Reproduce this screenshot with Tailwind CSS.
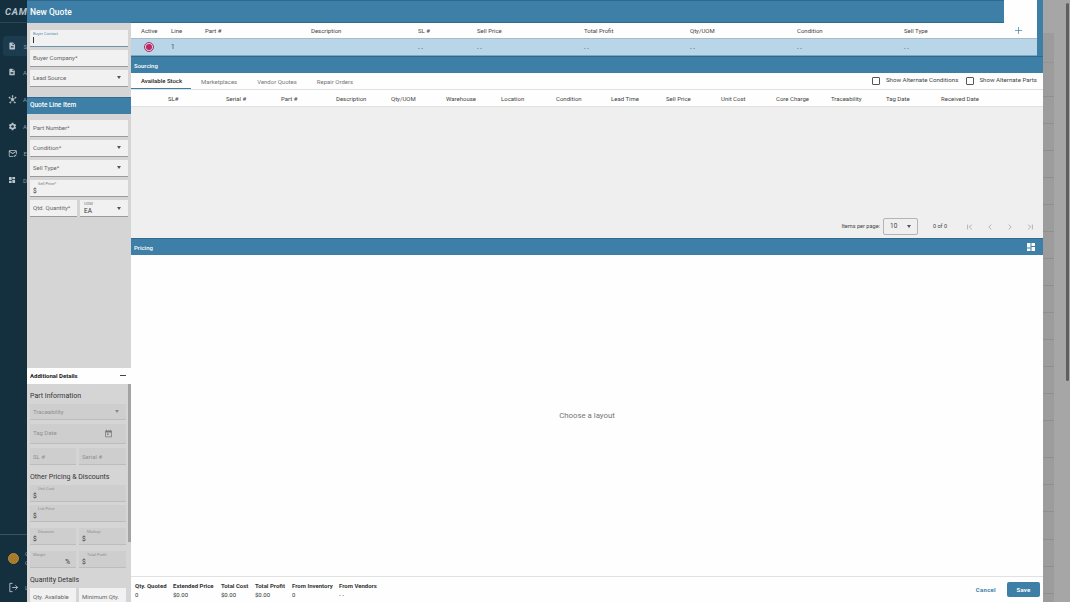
<!DOCTYPE html>
<html lang="en">
<head>
    <meta charset="UTF-8">
    <meta name="viewport" content="width=device-width, initial-scale=1.0">
    <title>New Quote</title>
    <script src="https://cdn.jsdelivr.net/npm/@tailwindcss/browser@4"></script>
</head>
<body class="relative w-[1070px] h-[602px] overflow-hidden bg-[#a6a6a6] font-['Roboto',sans-serif] text-[6px] text-[#3a3a3a]">

    <!-- page behind the dialog -->
    <div class="flex h-full">
        <aside class="w-[27px] shrink-0 h-full bg-[#14303f] flex flex-col">
            <div class="h-[23px] border-b border-[#2b4656] pl-[5px] pt-[6px] text-[9.5px] leading-[11px] font-bold italic text-[#b9c4ca] tracking-[0.8px] whitespace-nowrap">CAM.</div>
            <div class="mt-[13px] ml-[3px] w-[24px] h-[20px] rounded-l-[3px] bg-[#1b3c4e] pl-[5px] flex items-center gap-[7px] text-[#8b9aa3]">
                <svg class="w-[10px] h-[10px] fill-[#b9c3c9]" viewBox="0 0 24 24"><path d="M14 2H6c-1.1 0-1.99.9-1.99 2L4 20c0 1.1.89 2 1.99 2H18c1.1 0 2-.9 2-2V8l-6-6zm2 16H8v-2h8v2zm0-4H8v-2h8v2zm-3-5V3.5L18.5 9H13z"/></svg>
                <span>S</span>
            </div>
            <div class="mt-[6px] h-[20px] pl-[8px] flex items-center gap-[7px] text-[#8b9aa3]">
                <svg class="w-[10px] h-[10px] fill-[#b9c3c9]" viewBox="0 0 24 24"><path d="M14 2H6c-1.1 0-1.99.9-1.99 2L4 20c0 1.1.89 2 1.99 2H18c1.1 0 2-.9 2-2V8l-6-6zm2 16H8v-2h8v2zm0-4H8v-2h8v2zm-3-5V3.5L18.5 9H13z"/></svg>
                <span>A</span>
            </div>
            <div class="mt-[7px] h-[20px] pl-[8px] flex items-center gap-[6px] text-[#8b9aa3]">
                <svg class="w-[11px] h-[11px] fill-[#b9c3c9] stroke-[#b9c3c9]" viewBox="0 0 24 24" stroke-width="1.6"><circle cx="12" cy="12" r="3.5"/><path d="M12 12V3M12 12l8 -5M12 12l6 8M12 12l-6 8M12 12L4 7"/><circle cx="12" cy="3" r="1.6"/><circle cx="20" cy="7" r="1.6"/><circle cx="18" cy="20" r="1.6"/><circle cx="6" cy="20" r="1.6"/><circle cx="4" cy="7" r="1.6"/></svg>
                <span>A</span>
            </div>
            <div class="mt-[7px] h-[20px] pl-[8px] flex items-center gap-[6px] text-[#8b9aa3]">
                <svg class="w-[11px] h-[11px] fill-[#b9c3c9]" viewBox="0 0 24 24"><path d="M19.14 12.94c.04-.3.06-.61.06-.94 0-.32-.02-.64-.07-.94l2.03-1.58c.18-.14.23-.41.12-.61l-1.92-3.32c-.12-.22-.37-.29-.59-.22l-2.39.96c-.5-.38-1.03-.7-1.62-.94l-.36-2.54c-.04-.24-.24-.41-.48-.41h-3.84c-.24 0-.43.17-.47.41l-.36 2.54c-.59.24-1.13.57-1.62.94l-2.39-.96c-.22-.08-.47 0-.59.22L2.74 8.87c-.12.21-.08.47.12.61l2.03 1.58c-.05.3-.09.63-.09.94s.02.64.07.94l-2.03 1.58c-.18.14-.23.41-.12.61l1.92 3.32c.12.22.37.29.59.22l2.39-.96c.5.38 1.03.7 1.62.94l.36 2.54c.05.24.24.41.48.41h3.84c.24 0 .44-.17.47-.41l.36-2.54c.59-.24 1.13-.56 1.62-.94l2.39.96c.22.08.47 0 .59-.22l1.92-3.32c.12-.22.07-.47-.12-.61l-2.01-1.58zM12 15.6c-1.98 0-3.6-1.62-3.6-3.6s1.62-3.6 3.6-3.6 3.6 1.62 3.6 3.6-1.62 3.6-3.6 3.6z"/></svg>
                <span>A</span>
            </div>
            <div class="mt-[7px] h-[20px] pl-[8px] flex items-center gap-[6px] text-[#8b9aa3]">
                <svg class="w-[11px] h-[11px] fill-[#b9c3c9]" viewBox="0 0 24 24"><path d="M20 4H4c-1.1 0-2 .9-2 2v12c0 1.1.9 2 2 2h9v-2H4V8l8 5 8-5v5h2V6c0-1.1-.9-2-2-2zm-8 7L4 6h16l-8 5zm4.5 9.5l-2.5-2.5 1.4-1.4 1.1 1.1 3.6-3.6 1.4 1.4-5 5z"/></svg>
                <span>E</span>
            </div>
            <div class="mt-[7px] h-[20px] pl-[8px] flex items-center gap-[7px] text-[#8b9aa3]">
                <svg class="w-[10px] h-[10px] fill-[#b9c3c9]" viewBox="0 0 24 24"><path d="M3 13h8V3H3v10zm0 8h8v-6H3v6zm10 0h8V11h-8v10zm0-18v6h8V3h-8z"/></svg>
                <span>D</span>
            </div>
            <div class="mt-auto border-t border-[#3a5362] h-[68px] pl-[8px] flex flex-col">
                <div class="mt-[14px] flex items-center gap-[6px] text-[#8b9aa3]">
                    <div class="w-[11px] h-[11px] shrink-0 rounded-full bg-[#a97a2c] border border-[#b98a3a]"></div>
                    <div class="leading-[9px]"><div>G</div><div>C</div></div>
                </div>
                <div class="mt-[15px] flex items-center gap-[6px] text-[#8b9aa3]">
                    <svg class="w-[11px] h-[11px] shrink-0 fill-none stroke-[#b9c3c9]" viewBox="0 0 24 24" stroke-width="2"><path d="M10 3H4v18h6M9 12h12M16 7l5 5-5 5"/></svg>
                    <span>L</span>
                </div>
            </div>
        </aside>
        <main class="flex-1 h-full flex">
            <div class="ml-[1016px] w-[11px] h-full shrink-0 flex flex-col">
                <div class="h-[33px]"></div>
                <div class="h-[30px] bg-[#9c9c9c] border-b border-[#949494]"></div>
                <div class="h-[34px] bg-[#9c9c9c] border-b border-[#8f8f8f]"></div>
                <div class="h-[27px] bg-[#9c9c9c] border-b border-[#8f8f8f]"></div>
                <div class="h-[27px] bg-[#9c9c9c] border-b border-[#8f8f8f]"></div>
                <div class="h-[27px] bg-[#9c9c9c] border-b border-[#8f8f8f]"></div>
                <div class="h-[27px] bg-[#9c9c9c] border-b border-[#8f8f8f]"></div>
                <div class="h-[27px] bg-[#9c9c9c] border-b border-[#8f8f8f]"></div>
                <div class="h-[27px] bg-[#9c9c9c] border-b border-[#8f8f8f]"></div>
                <div class="h-[27px] bg-[#9c9c9c] border-b border-[#8f8f8f]"></div>
                <div class="h-[27px] bg-[#9c9c9c] border-b border-[#8f8f8f]"></div>
                <div class="h-[27px] bg-[#9c9c9c] border-b border-[#8f8f8f]"></div>
                <div class="h-[27px] bg-[#9c9c9c] border-b border-[#8f8f8f]"></div>
                <div class="h-[27px] bg-[#9c9c9c] border-b border-[#8f8f8f]"></div>
                <div class="h-[27px] bg-[#9c9c9c] border-b border-[#8f8f8f]"></div>
                <div class="h-[37px] bg-[#9c9c9c] border-b border-[#8f8f8f]"></div>
                <div class="h-[27px] bg-[#9c9c9c] border-b border-[#8f8f8f]"></div>
                <div class="h-[27px] bg-[#9c9c9c] border-b border-[#8f8f8f]"></div>
                <div class="h-[28px] bg-[#9c9c9c] border-b border-[#8f8f8f]"></div>
                <div class="h-[27px] bg-[#9c9c9c] border-b border-[#8f8f8f]"></div>
                <div class="h-[27px] bg-[#9c9c9c] border-b border-[#8f8f8f]"></div>
                <div class="flex-1 bg-[#9c9c9c]"></div>
            </div>
        </main>
    </div>
    <div class="absolute left-[1066px] top-[3px] w-[2.5px] h-[378px] rounded-full bg-[#5f5f5f]"></div>

    <!-- dialog -->
    <div class="absolute left-[27px] top-0 w-[1016px] h-[602px] flex bg-white opacity-[.995]">

        <!-- left form -->
        <div class="w-[104px] shrink-0 h-full flex flex-col bg-[#d6d6d6]">
            <div class="h-[23px] shrink-0 bg-[#3d7fa6] border-t border-[#2f6a8e] pl-[3px] flex items-center text-[8.5px] font-medium text-white">New Quote</div>
            <div class="h-[345px] shrink-0 flex flex-col px-[3px]">
                <div class="mt-[7px] h-[17px] bg-[#f2f2f2] border-b border-[#6d93ab] rounded-t-[1px] pl-[3px] pt-[1px]">
                    <div class="text-[4px] leading-[5px] text-[#5a8fb0]">Buyer Contact</div>
                    <div class="mt-[1px] w-px h-[6px] bg-[#333]"></div>
                </div>
                <div class="mt-[3px] h-[17px] bg-[#f2f2f2] border-b border-[#9a9a9a] pl-[3px] pb-[1px] flex items-center text-[#666]">Buyer Company*</div>
                <div class="mt-[3px] h-[17px] bg-[#f2f2f2] border-b border-[#9a9a9a] pl-[3px] pr-[7px] pb-[1px] flex items-center justify-between text-[#666]">Lead Source<span class="w-0 h-0 border-x-[2.5px] border-x-transparent border-t-[3px] border-t-[#555]"></span></div>
                <div class="mt-[10px] -mx-[3px] h-[17px] bg-[#3d7fa6] border-t border-[#2f6a8e] pl-[3px] flex items-center text-[6.5px] font-medium text-white">Quote Line Item</div>
                <div class="mt-[6px] h-[17px] bg-[#f2f2f2] border-b border-[#9a9a9a] pl-[3px] pb-[1px] flex items-center text-[#666]">Part Number*</div>
                <div class="mt-[3px] h-[17px] bg-[#f2f2f2] border-b border-[#9a9a9a] pl-[3px] pr-[7px] pb-[1px] flex items-center justify-between text-[#666]">Condition*<span class="w-0 h-0 border-x-[2.5px] border-x-transparent border-t-[3px] border-t-[#555]"></span></div>
                <div class="mt-[3px] h-[17px] bg-[#f2f2f2] border-b border-[#9a9a9a] pl-[3px] pr-[7px] pb-[1px] flex items-center justify-between text-[#666]">Sell Type*<span class="w-0 h-0 border-x-[2.5px] border-x-transparent border-t-[3px] border-t-[#555]"></span></div>
                <div class="mt-[3px] h-[17px] bg-[#f2f2f2] border-b border-[#9a9a9a] pl-[3px] pt-[1px]">
                    <div class="pl-[5px] text-[4px] leading-[5px] text-[#777]">Sell Price*</div>
                    <div class="mt-[1px] text-[6.5px] leading-[8px] text-[#333]">$</div>
                </div>
                <div class="mt-[3px] flex gap-[3px]">
                    <div class="w-[47px] h-[17px] bg-[#f2f2f2] border-b border-[#9a9a9a] pl-[3px] pb-[1px] flex items-center text-[#666]">Qtd. Quantity*</div>
                    <div class="w-[48px] h-[17px] bg-[#f2f2f2] border-b border-[#9a9a9a] pl-[4px] pr-[7px] flex items-center justify-between">
                        <div><div class="text-[4px] leading-[5px] text-[#777]">UOM</div><div class="mt-[1px] text-[6.5px] leading-[8px] text-[#333]">EA</div></div>
                        <span class="w-0 h-0 border-x-[2.5px] border-x-transparent border-t-[3px] border-t-[#555]"></span>
                    </div>
                </div>
            </div>
            <div class="h-[16px] shrink-0 bg-white pl-[3px] pr-[5px] pb-[2px] flex items-center justify-between font-bold text-[#222]">Additional Details<span class="w-[6px] h-[1px] bg-[#444]"></span></div>
            <div class="flex-1 flex min-h-0 overflow-hidden">
                <div class="w-[101px] pl-[3px] pr-[2px] flex flex-col shrink-0 self-start">
                    <div class="mt-[8px] text-[7px] leading-[9px] text-[#333]">Part Information</div>
                    <div class="mt-[3px] h-[16px] bg-[#cfcfcf] border-b border-[#bdbdbd] pl-[3px] pr-[7px] flex items-center justify-between text-[#929292]">Traceability<span class="w-0 h-0 border-x-[2.5px] border-x-transparent border-t-[3px] border-t-[#8a8a8a]"></span></div>
                    <div class="mt-[4px] h-[20px] bg-[#cfcfcf] border-b border-[#bdbdbd] pl-[3px] pr-[13px] flex justify-between text-[#929292] pt-[4px]">Tag Date
                        <svg class="w-[9px] h-[9px] mt-[1px] fill-[#777]" viewBox="0 0 24 24"><path d="M19 4h-1V2h-2v2H8V2H6v2H5c-1.1 0-2 .9-2 2v14c0 1.1.9 2 2 2h14c1.1 0 2-.9 2-2V6c0-1.1-.9-2-2-2zm0 16H5V9h14v11zM8 12h4v4H8z"/></svg>
                    </div>
                    <div class="mt-[4px] flex gap-[3px]">
                        <div class="w-[46px] h-[17px] bg-[#cfcfcf] border-b border-[#bdbdbd] pl-[3px] flex items-center text-[#929292]">SL #</div>
                        <div class="w-[47px] h-[17px] bg-[#cfcfcf] border-b border-[#bdbdbd] pl-[3px] flex items-center text-[#929292]">Serial #</div>
                    </div>
                    <div class="mt-[8px] text-[7px] leading-[9px] text-[#333]">Other Pricing &amp; Discounts</div>
                    <div class="mt-[3px] h-[17px] bg-[#cfcfcf] border-b border-[#bdbdbd] pl-[3px]">
                        <div class="pl-[5px] text-[4px] leading-[5px] pt-[1px] text-[#8f8f8f]">Unit Cost</div>
                        <div class="text-[6.5px] leading-[8px] mt-[1px] text-[#333]">$</div>
                    </div>
                    <div class="mt-[3px] h-[17px] bg-[#cfcfcf] border-b border-[#bdbdbd] pl-[3px]">
                        <div class="pl-[5px] text-[4px] leading-[5px] pt-[1px] text-[#8f8f8f]">List Price</div>
                        <div class="text-[6.5px] leading-[8px] mt-[1px] text-[#333]">$</div>
                    </div>
                    <div class="mt-[6px] flex gap-[3px]">
                        <div class="w-[46px] h-[17px] bg-[#cfcfcf] border-b border-[#bdbdbd] pl-[3px]">
                            <div class="pl-[5px] text-[4px] leading-[5px] pt-[1px] text-[#8f8f8f]">Discount</div>
                            <div class="text-[6.5px] leading-[8px] mt-[1px] text-[#333]">$</div>
                        </div>
                        <div class="w-[47px] h-[17px] bg-[#cfcfcf] border-b border-[#bdbdbd] pl-[3px]">
                            <div class="pl-[5px] text-[4px] leading-[5px] pt-[1px] text-[#8f8f8f]">Markup</div>
                            <div class="text-[6.5px] leading-[8px] mt-[1px] text-[#333]">$</div>
                        </div>
                    </div>
                    <div class="mt-[6px] flex gap-[3px]">
                        <div class="w-[46px] h-[17px] bg-[#cfcfcf] border-b border-[#bdbdbd] pl-[3px] pr-[6px]">
                            <div class="text-[4px] leading-[5px] pt-[1px] text-[#8f8f8f]">Margin</div>
                            <div class="text-[6.5px] leading-[8px] mt-[1px] text-right text-[#333]">%</div>
                        </div>
                        <div class="w-[47px] h-[17px] bg-[#cfcfcf] border-b border-[#bdbdbd] pl-[3px]">
                            <div class="pl-[5px] text-[4px] leading-[5px] pt-[1px] text-[#8f8f8f]">Total Profit</div>
                            <div class="text-[6.5px] leading-[8px] mt-[1px] text-[#333]">$</div>
                        </div>
                    </div>
                    <div class="mt-[8px] text-[7px] leading-[9px] text-[#333]">Quantity Details</div>
                    <div class="mt-[3px] flex gap-[3px]">
                        <div class="w-[46px] h-[18px] bg-[#f2f2f2] pl-[3px] pb-[2px] flex items-center text-[#666]">Qty. Available</div>
                        <div class="w-[47px] h-[18px] bg-[#f2f2f2] pl-[3px] pb-[2px] flex items-center text-[#666]">Minimum Qty.</div>
                    </div>
                </div>
                <div class="w-[3px] shrink-0 h-[158px] bg-[#a3a3a3]"></div>
            </div>
        </div>

        <!-- right content -->
        <div class="flex-1 h-full flex flex-col min-w-0">
            <div class="h-[56px] shrink-0 flex bg-[#3d7fa6]">
                <div class="w-[906px] flex flex-col">
                    <div class="h-[23px] flex">
                        <div class="w-[873px] bg-[#3d7fa6] border-y border-y-[#2f6a8e]"></div>
                        <div class="flex-1 bg-white"></div>
                    </div>
                    <div class="h-[16px] bg-white border-b border-[#a9bcc8] grid grid-cols-[10px_30px_34px_106px_107px_59px_107px_106px_107px_107px_108px_1fr] items-center text-[#444]">
                        <span></span><span>Active</span><span>Line</span><span>Part #</span><span>Description</span><span>SL #</span><span>Sell Price</span><span>Total Profit</span><span>Qty/UOM</span><span>Condition</span><span>Sell Type</span>
                        <svg class="w-[7px] h-[7px] ml-[3px] stroke-[#3d7fa6] fill-none" viewBox="0 0 10 10" stroke-width="1"><path d="M5 0v10M0 5h10"/></svg>
                    </div>
                    <div class="h-[17px] bg-[#bad7ea] border-b border-[#7fa9c2] grid grid-cols-[10px_30px_34px_106px_107px_59px_107px_106px_107px_107px_108px_1fr] items-center text-[#444]">
                        <span></span>
                        <span class="ml-[3px] w-[10px] h-[10px] rounded-full border border-[#c2275f] flex items-center justify-center"><span class="w-[6px] h-[6px] rounded-full bg-[#c2275f]"></span></span>
                        <span class="mt-[2px] text-[6.5px]">1</span><span></span><span></span><span>- -</span><span>- -</span><span>- -</span><span>- -</span><span>- -</span><span>- -</span><span></span>
                    </div>
                </div>
            </div>
            <div class="h-[17px] shrink-0 bg-[#3d7fa6] border-t border-[#2f6a8e] pl-[3px] flex items-center text-[6px] font-medium text-white">Sourcing</div>
            <div class="h-[17px] shrink-0 border-b border-[#e2e2e2] flex items-center text-[#777]">
                <div class="w-[60px] h-full pl-[10px] flex items-center font-medium text-[#222] border-b border-[#3d7fa6]">Available Stock</div>
                <div class="ml-[10px]">Marketplaces</div>
                <div class="ml-[20px]">Vendor Quotes</div>
                <div class="ml-[20px]">Repair Orders</div>
                <div class="ml-auto flex items-center text-[#444] text-[6.15px]">
                    <span class="w-[8px] h-[8px] border border-[#555] rounded-[1px]"></span>
                    <span class="ml-[6px]">Show Alternate Conditions</span>
                    <span class="ml-[8px] w-[8px] h-[8px] border border-[#555] rounded-[1px]"></span>
                    <span class="ml-[5px] mr-[6px]">Show Alternate Parts</span>
                </div>
            </div>
            <div class="h-[17px] shrink-0 border-b border-[#e2e2e2] pl-[37px] grid grid-cols-[58px_repeat(14,55px)] items-center text-[#444]">
                <span>SL#</span><span>Serial #</span><span>Part #</span><span>Description</span><span>Qty/UOM</span><span>Warehouse</span><span>Location</span><span>Condition</span><span>Lead Time</span><span>Sell Price</span><span>Unit Cost</span><span>Core Charge</span><span>Traceability</span><span>Tag Date</span><span>Received Date</span>
            </div>
            <div class="h-[131px] shrink-0 bg-[#f0f0f0] flex flex-col">
                <div class="mt-auto mb-[3px] h-[17px] flex items-center justify-end text-[#444]">
                    <span class="text-[5.6px]">Items per page:</span>
                    <div class="ml-[3px] w-[35px] h-[17px] border border-[#b5b5b5] rounded-[2px] pl-[6px] pr-[6px] flex items-center justify-between text-[6.5px]">10<span class="w-0 h-0 border-x-[2.5px] border-x-transparent border-t-[3px] border-t-[#555]"></span></div>
                    <span class="ml-[15px] text-[5.5px]">0 of 0</span>
                    <div class="ml-[20px] mr-[10px] flex gap-[14px] text-[#8a8a8a]">
                        <svg class="w-[6px] h-[6px] fill-none stroke-[#8a8a8a]" viewBox="0 0 10 10"><path d="M1 1v8M8 1L4 5l4 4"/></svg>
                        <svg class="w-[6px] h-[6px] fill-none stroke-[#8a8a8a]" viewBox="0 0 10 10"><path d="M7 1L3 5l4 4"/></svg>
                        <svg class="w-[6px] h-[6px] fill-none stroke-[#8a8a8a]" viewBox="0 0 10 10"><path d="M3 1l4 4-4 4"/></svg>
                        <svg class="w-[6px] h-[6px] fill-none stroke-[#8a8a8a]" viewBox="0 0 10 10"><path d="M2 1l4 4-4 4M9 1v8"/></svg>
                    </div>
                </div>
            </div>
            <div class="h-[17px] shrink-0 bg-[#3d7fa6] border-t border-[#2f6a8e] pl-[3px] pr-[8px] flex items-center justify-between font-medium text-white">Pricing
                <svg class="w-[8px] h-[8px] fill-white" viewBox="0 0 8 8"><path d="M0 0h3.5v4.5H0zM4.5 0H8v3H4.5zM0 5.5h3.5V8H0zM4.5 4H8v4H4.5z"/></svg>
            </div>
            <div class="flex-1 min-h-0 flex items-center justify-center text-[7.8px] text-[#777]">Choose a layout</div>
            <div class="h-[26px] shrink-0 border-t border-[#e2e2e2] pl-[4px] pr-[3px] flex items-center text-[#333]">
                <div class="w-[38px]"><div class="font-bold">Qty. Quoted</div><div>0</div></div>
                <div class="w-[48px]"><div class="font-bold">Extended Price</div><div>$0.00</div></div>
                <div class="w-[34px]"><div class="font-bold">Total Cost</div><div>$0.00</div></div>
                <div class="w-[37px]"><div class="font-bold">Total Profit</div><div>$0.00</div></div>
                <div class="w-[47px]"><div class="font-bold">From Inventory</div><div>0</div></div>
                <div><div class="font-bold">From Vendors</div><div>- -</div></div>
                <div class="ml-auto font-bold text-[#3d7fa6] tracking-[0.3px]">Cancel</div>
                <button class="ml-[11px] w-[33px] h-[15px] bg-[#3d7fa6] rounded-[2px] text-[6px] font-bold text-white tracking-[0.2px]">Save</button>
            </div>
        </div>
    </div>

</body>
</html>
